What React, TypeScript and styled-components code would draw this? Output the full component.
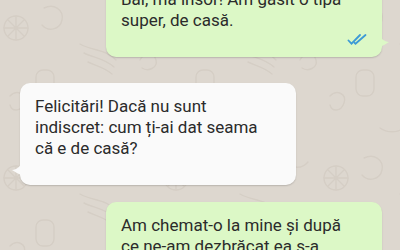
import React from 'react';
import styled, { createGlobalStyle } from 'styled-components';

const doodle = encodeURIComponent(
    `<svg xmlns="http://www.w3.org/2000/svg" width="160" height="150" viewBox="0 0 160 150">
<g fill="none" stroke="#d5cec5" stroke-width="1.4" stroke-linecap="round" stroke-linejoin="round">
<circle cx="16" cy="28" r="12"/><path d="M16 16v24M4 28h24M8 20l16 16M24 20L8 36"/>
<path d="M44 8c10-5 20 2 18 12s-14 12-20 5"/>
<path d="M80 44c12 7 26 5 36 16M84 53c10 5 20 5 30 14M88 62c8 4 16 5 24 12"/>
<rect x="36" y="70" width="18" height="26" rx="7"/>
<path d="M10 96c7-7 17-2 14 7s-12 9-14 2M112 104l14 9-7 12-14-9z"/>
<path d="M60 128c7 5 17 5 24 0M128 12c5 7 14 7 20 0M140 60c4-8 14-8 16 0s-8 12-14 8"/>
</g></svg>`
);

const GlobalStyle = createGlobalStyle`
    html, body {
        margin: 0;
        padding: 0;
        height: 100%;
        overflow: hidden;
    }
    body {
        background-color: #ddd7cf;
        background-image: url("data:image/svg+xml,${doodle}");
        font-family: Roboto, "Noto Sans", sans-serif;
    }
`;

const Chat = styled.div`
    display: flex;
    flex-direction: column;
    margin-top: -24px;
    padding: 0 18px 0 20px;
`;

const Bubble = styled.div<{ $out?: boolean; $gap?: number }>`
    position: relative;
    box-sizing: border-box;
    width: 276px;
    align-self: ${p => (p.$out ? 'flex-end' : 'flex-start')};
    margin-top: ${p => p.$gap || 0}px;
    padding: 13px 15px 26px 15px;
    border-radius: 10px;
    background: ${p => (p.$out ? '#dcf8c6' : '#fafafa')};
    box-shadow: 0 1px 1.5px rgba(0, 0, 0, 0.16);
    color: #2b2b2b;
    font-size: 17px;
    line-height: 21px;
`;

const Tail = styled.svg<{ $out?: boolean }>`
    position: absolute;
    bottom: 10px;
    ${p => (p.$out ? 'right: -8px;' : 'left: -9px; transform: scaleX(-1);')}
`;

const Ticks = styled.svg`
    position: absolute;
    right: 15px;
    bottom: 12px;
`;

const Line = styled.span`
    display: block;
    white-space: nowrap;
`;

const BubbleTail: React.FC<{ out?: boolean; color: string }> = ({ out, color }) => (
    <Tail $out={out} width="10" height="12" viewBox="0 0 10 12">
        <path d="M0 0 C1 4 4 6.5 9 7 C6 9 3 10.5 0 12 Z" fill={color} />
    </Tail>
);

const App: React.FC = () => {
    return (
        <>
            <GlobalStyle />
            <Chat>
                <Bubble $out>
                    <Line>Bai, ma insor! Am gasit o tipa</Line>
                    <Line>super, de casă.</Line>
                    <Ticks width="20" height="11" viewBox="0 0 20 11">
                        <g fill="none" stroke="#3d9ad6" strokeWidth="1.8" strokeLinecap="round">
                            <path d="M1.5 6.5l3 3.2L13 1" />
                            <path d="M7.5 8.8l1 0.9L18.5 1" />
                        </g>
                    </Ticks>
                    <BubbleTail out color="#dcf8c6" />
                </Bubble>
                <Bubble $gap={26}>
                    <Line>Felicitări! Dacă nu sunt</Line>
                    <Line>indiscret: cum ți-ai dat seama</Line>
                    <Line>că e de casă?</Line>
                    <BubbleTail color="#fafafa" />
                </Bubble>
                <Bubble $out $gap={17}>
                    <Line>Am chemat-o la mine și după</Line>
                    <Line>ce ne-am dezbrăcat ea s-a</Line>
                </Bubble>
            </Chat>
        </>
    );
};

export default App;
